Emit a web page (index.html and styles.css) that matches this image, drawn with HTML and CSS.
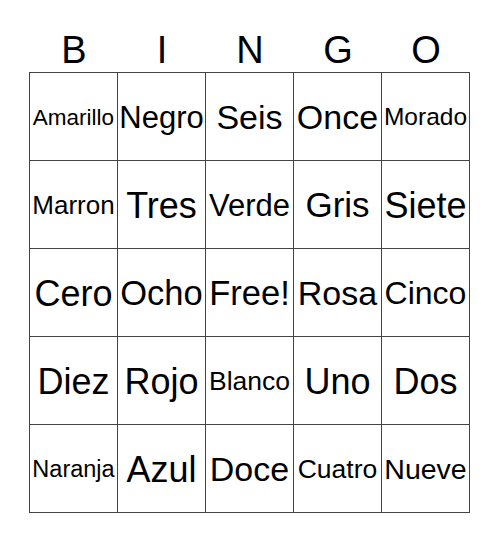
FILE: index.html
```html
<!DOCTYPE html>
<html>
<head>
<meta charset="utf-8">
<link rel="stylesheet" href="styles.css">
</head>
<body>
<div class="card">
  <div class="header">
    <span>B</span><span>I</span><span>N</span><span>G</span><span>O</span>
  </div>
  <div class="grid">
    <div class="cell" style="font-size:22.5px">Amarillo</div>
    <div class="cell" style="font-size:31px">Negro</div>
    <div class="cell" style="font-size:34px">Seis</div>
    <div class="cell" style="font-size:34px">Once</div>
    <div class="cell" style="font-size:24.5px">Morado</div>

    <div class="cell" style="font-size:26px">Marron</div>
    <div class="cell" style="font-size:36px">Tres</div>
    <div class="cell" style="font-size:31px">Verde</div>
    <div class="cell" style="font-size:35px">Gris</div>
    <div class="cell" style="font-size:36px">Siete</div>

    <div class="cell" style="font-size:36px">Cero</div>
    <div class="cell" style="font-size:34.5px">Ocho</div>
    <div class="cell" style="font-size:34.5px">Free!</div>
    <div class="cell" style="font-size:34px">Rosa</div>
    <div class="cell" style="font-size:32px">Cinco</div>

    <div class="cell" style="font-size:36px">Diez</div>
    <div class="cell" style="font-size:36px">Rojo</div>
    <div class="cell" style="font-size:26.5px">Blanco</div>
    <div class="cell" style="font-size:36px">Uno</div>
    <div class="cell" style="font-size:36px">Dos</div>

    <div class="cell" style="font-size:23.5px">Naranja</div>
    <div class="cell" style="font-size:36px">Azul</div>
    <div class="cell" style="font-size:34px">Doce</div>
    <div class="cell" style="font-size:26.5px">Cuatro</div>
    <div class="cell" style="font-size:28.5px">Nueve</div>
  </div>
</div>
</body>
</html>
```
FILE: styles.css
```css
html, body {
  margin: 0;
  padding: 0;
  background: #fff;
}
body {
  font-family: "Liberation Sans", Arial, sans-serif;
  color: #000;
}
.card {
  padding: 29px 0 0 29px;
  width: 441px;
}
.header {
  display: grid;
  grid-template-columns: repeat(5, 88px);
  height: 43px;
  line-height: 43px;
  font-size: 38px;
  padding-left: 1px;
}
.header span {
  text-align: center;
}
.grid {
  display: grid;
  grid-template-columns: repeat(5, 88px);
  grid-auto-rows: 88px;
  border-top: 1px solid #444;
  border-left: 1px solid #444;
  width: 440px;
}
.cell {
  border-right: 1px solid #444;
  border-bottom: 1px solid #444;
  display: flex;
  align-items: center;
  justify-content: center;
  white-space: nowrap;
  line-height: 1.15;
  padding-top: 2px;
}
```
